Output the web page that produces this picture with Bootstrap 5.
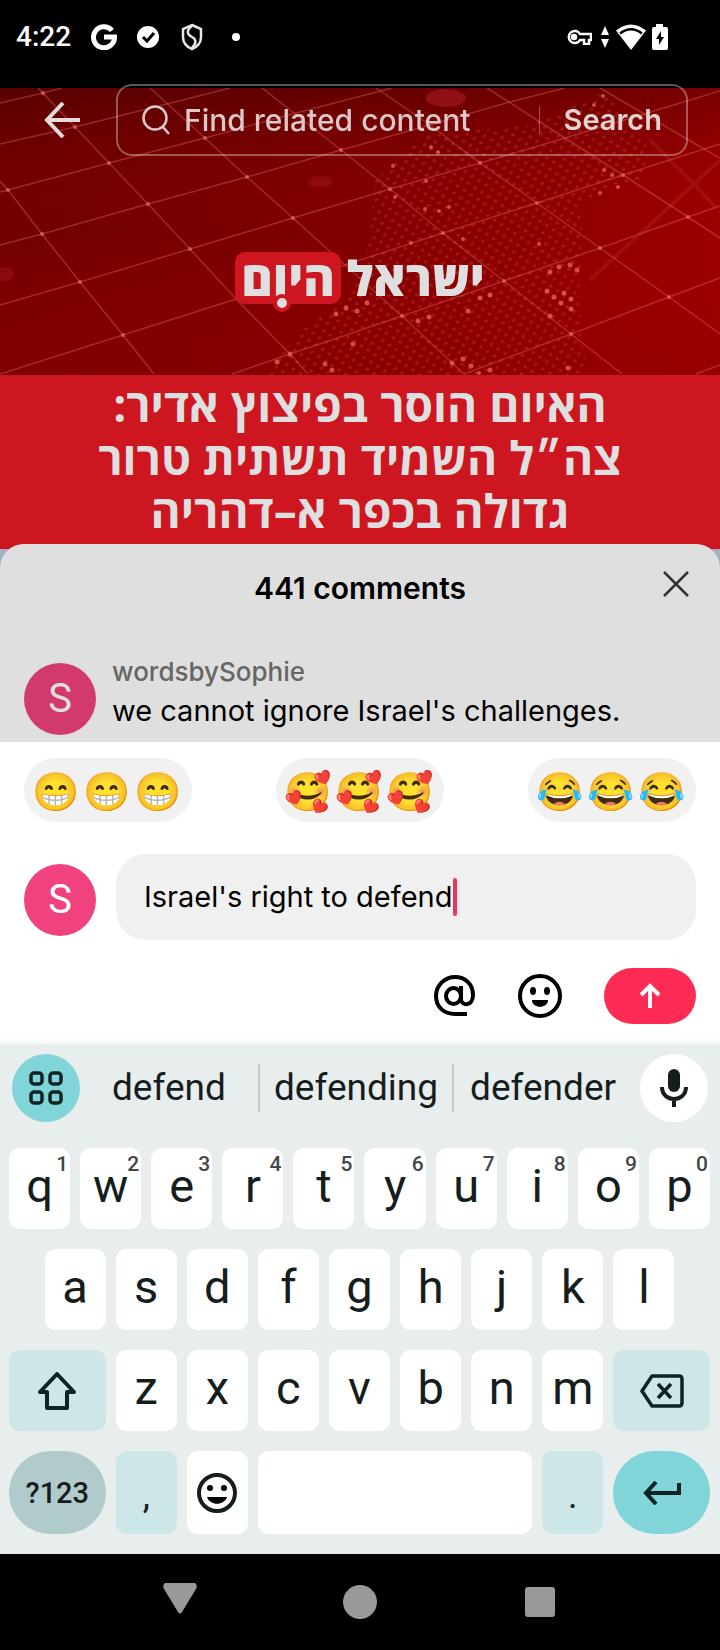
<!DOCTYPE html>
<html lang="en">
<head>
<meta charset="utf-8">
<meta name="viewport" content="width=device-width, initial-scale=1">
<title>Comments</title>
<link href="https://cdn.jsdelivr.net/npm/bootstrap@5.3.0/dist/css/bootstrap.min.css" rel="stylesheet">
<style>
  body { font-family: Inter, "Liberation Sans", sans-serif; background: #000; color: #000; }
  button { font-family: inherit; }
  svg { display: block; flex: none; }
  .icon-btn { border: 0; background: none; padding: 0; display: flex; align-items: center; justify-content: center; }

  .statusbar { height: 88px; padding: 0 52px 14px 16px; color: #fff; }
  .clock { font: 500 28px/32px Roboto, sans-serif; width: 75px; }
  .signals { gap: 6px; }

  .hero { display: flow-root; height: 287px; background: #7d0000; }
  .hero-art { position: absolute; inset: 0; width: 100%; height: 100%; }
  .searchrow { position: relative; margin-top: -4px; padding: 0 32px 0 44px; gap: 36px; color: #dfdfdf; }
  .searchbox { height: 72px; border: 2px solid rgba(255,255,255,.34); border-radius: 16px; padding: 0 24px; }
  .searchbox input { border: 0; background: none; outline: 0; width: 0; margin-left: 14px; padding: 0; color: inherit; font: 500 30px/40px Inter, sans-serif; }
  .searchbox input::placeholder { color: #dcc8c8; opacity: 1; }
  .searchbox button { font: 600 29px/40px Inter, sans-serif; color: #e3d4d4; }
  .split { width: 1px; height: 28px; background: rgba(255,255,255,.3); margin-right: 24px; }

  .masthead { position: relative; margin-top: 96px; gap: 6px; font: 800 48px/52px "Open Sans", "Liberation Sans", sans-serif; color: #dfdfdf; }
  .masthead-tag { position: relative; background: #ce1620; border-radius: 10px; padding: 0 6px; }
  .masthead-tag i { position: absolute; left: 38px; bottom: -8px; width: 18px; height: 18px; border: 4px solid #ce1620; border-radius: 50%; background: #dfdfdf; }

  .headline { background: #ce1620; color: #dfdfdf; height: 174px; padding-top: 3px; font: 700 46px/53px "Open Sans", "Liberation Sans", sans-serif; margin: 0; }
  .behind { background: linear-gradient(#ce1620 5px, #a3afc2 5px); margin-top: -5px; }
  .sheet { background: #dfdfdf; border-radius: 24px 24px 0 0; height: 198px; padding: 24px 24px 7px; }
  .sheet h1 { font-size: 30px; line-height: 40px; font-weight: 600; margin: 0; }
  .close-pos { position: absolute; right: 0; top: 0; padding: 3px 7px; }
  .avatar { width: 72px; height: 72px; border-radius: 50%; background: #f0427e; color: #fff; font: 400 40px/72px Roboto, sans-serif; text-align: center; flex: none; }
  .avatar-dim { background: #d23a6e; color: #dfdfdf; }
  .who { font-size: 26px; line-height: 38px; font-weight: 500; color: #666; text-decoration: none; }
  .said { font-size: 29px; line-height: 40px; margin: 0; }

  .composer { background: linear-gradient(to top, #f4f6f6, #fff 6px); padding: 16px 24px 20px; height: 302px; }
  .chips { margin-bottom: 32px; }
  .chip { border: 0; width: 168px; height: 64px; border-radius: 32px; background: #f1f1f1; padding: 2px 11px 0; gap: 9px; font: 38px/64px "Noto Color Emoji", sans-serif; }
  .chip span { width: 42px; display: flex; justify-content: center; }
  .entry { gap: 20px; }
  .field { height: 86px; border-radius: 30px; background: #f0f0f0; padding: 0 28px; }
  .field input { border: 0; background: none; outline: 0; padding: 0; width: 309px; font-size: 29px; line-height: 40px; }
  .caret { width: 4px; height: 38px; border-radius: 2px; background: #ea3560; }
  .tools { gap: 42px; margin-top: 28px; }
  .send { width: 92px; height: 56px; border-radius: 28px; background: #fe2c55; }

  .keyboard { background: #e8eeee; padding: 10px 5px 20px 4px; height: 510px; color: #161d1d; font-family: Roboto, sans-serif; }
  .suggest { padding: 0 7px 0 8px; height: 68px; margin-bottom: 26px; }
  .round { width: 68px; height: 68px; border-radius: 50%; flex: none; }
  .word { border: 0; background: none; padding: 0; font-size: 37px; line-height: 48px; flex: 37 1 0; color: inherit; }
  .word-main { flex-grow: 40; border: solid #c4caca; border-width: 0 2px; }
  .keys { display: grid; grid-template-columns: repeat(20, 1fr); row-gap: 20px; }
  .key { position: relative; grid-column: span 2; height: 81px; margin: 0 5px; border: 0; border-radius: 11px; background: #fff; color: inherit; padding: 0 0 6px; font-size: 47px; line-height: 74px; display: flex; justify-content: center; align-items: center; }
  .key sup { position: absolute; top: 4px; right: 2px; font-size: 21px; line-height: 24px; font-weight: 500; color: #414848; }
  .indent { grid-column: 2 / span 2; }
  .wide { grid-column: span 3; }
  .space { grid-column: span 8; }
  .low { height: 83px; }
  .tint { background: #cde7e8; }
  .teal { background: #81d4d8; }
  .pill { border-radius: 42px; }
  .sym { background: #b1cbcd; font-size: 29px; font-weight: 500; white-space: nowrap; padding: 0; }
  .punct { font-size: 36px; padding: 6px 0 0; }

  .navbar-sys { height: 96px; padding: 0 90px; background: #000; }
  .navbar-sys button { flex: 1; }
</style>
</head>
<body>
<header class="statusbar d-flex align-items-center">
  <span class="clock">4:22</span>
  <svg width="26" height="26" viewBox="0 0 26 26" fill="none" stroke="#fff" stroke-width="5"><path d="M21 6.500A10.500 10.500 0 1 0 23.500 13H13"/></svg>
  <svg class="ms-3 me-3" width="28" height="24" viewBox="0 0 28 24"><circle cx="15" cy="12" r="11" fill="#fff"/><path d="M10 12l4 4 7-8" fill="none" stroke="#000" stroke-width="3"/></svg>
  <svg width="30" height="28" viewBox="0 0 30 28" fill="none" stroke="#e8e8e8" stroke-width="2.500"><path d="M15 2l9 4v8c0 6-4 10-9 12-5-2-9-6-9-12V6z"/><path d="M15 3C8 8 11 12 15 14s5 6 0 11"/></svg>
  <svg class="ms-3" width="24" height="18" viewBox="0 0 24 18"><circle cx="13" cy="9" r="4" fill="#fff"/></svg>
  <div class="signals d-flex align-items-center ms-auto">
    <svg width="26" height="16" viewBox="0 0 26 16" fill="none" stroke="#fff" stroke-width="2.500"><path d="M14 5a6 6 0 1 0 0 6h4v4h5v-4h2V5z"/><circle cx="8" cy="8" r="2" fill="#fff"/></svg>
    <svg width="12" height="22" viewBox="0 0 12 22" fill="#fff"><path d="M7 0l4 9H3zM7 22l4-9H3z"/></svg>
    <svg width="30" height="26" viewBox="0 0 30 26"><path d="M0 6.500Q15-5.500 30 6.500L15 26z" fill="#fff"/><path d="M4 9.500Q15 1 26 9.500" fill="none" stroke="#000" stroke-width="2.500"/></svg>
    <svg width="16" height="26" viewBox="0 0 16 26"><path d="M4 0h7v3h3q2 0 2 2v19q0 2-2 2H2q-2 0-2-2V5q0-2 2-2h2z" fill="#fff"/><path d="M9 7l-5 8h3v6l5-8H9z"/></svg>
  </div>
</header>

<section class="hero position-relative">
  <svg class="hero-art" viewBox="0 88 720 287" preserveAspectRatio="none" aria-hidden="true">
    <defs>
      <linearGradient id="base" x1="0" y1="0" x2="1" y2="0"><stop offset="0" stop-color="#700000"/><stop offset=".35" stop-color="#7a0000"/><stop offset=".7" stop-color="#8a0000"/><stop offset="1" stop-color="#9c0000"/></linearGradient>
      <linearGradient id="lift" x1="0" y1="0" x2="0" y2="1"><stop offset="0" stop-color="#200000" stop-opacity=".3"/><stop offset=".5" stop-color="#a00" stop-opacity="0"/><stop offset="1" stop-color="#900000" stop-opacity=".5"/></linearGradient>
      <pattern id="dots" width="11" height="12" patternUnits="userSpaceOnUse" patternTransform="rotate(-14)"><ellipse cx="3" cy="3" rx="2" ry="1.500" fill="#d04444"/><ellipse cx="8.500" cy="9" rx="2" ry="1.500" fill="#d04444"/></pattern>
    </defs>
    <rect y="88" width="720" height="287" fill="url(#base)"/>
    <rect y="88" width="720" height="287" fill="url(#lift)"/>
    <path d="M605 92L650 150 640 180 582 200 580 330 588 375H265L300 330 350 295 368 250 375 180 425 135 530 125z" fill="url(#dots)" opacity=".36"/>
    <g fill="none" stroke="#e06060" stroke-opacity=".42" stroke-width="1.500">
      <path d="M0 103L43 93 62 88M0 144L75 127 167 104 230 88M0 192L109 163 205 138 300 112 392 88M0 245L42 234 148 204 247 177 341 150 430 125 510 102 565 88M0 305L80 282 190 249 293 218 390 189 480 163 565 138 720 91M0 374L123 335 236 299 345 265 443 233 537 203 623 175 704 149 720 144M232 374L290 354 402 316 504 281 600 248 688 217 720 206M464 374L571 334 669 297 720 278M696 374L720 365"/>
      <path d="M0 181L8 190 42 234 80 282 123 335 154 374M38 88L75 127 109 163 148 204 190 249 236 299 290 354 308 374M150 88L205 138 247 177 293 218 345 265 402 316 464 374M262 88L341 150 390 189 443 233 504 281 571 334 622 374M376 88L430 125 480 163 537 203 600 248 669 297 720 334M487 88L565 138 623 175 688 217 720 238M600 88L704 149 720 158"/>
      <path d="M720 160L694 184 590 280M650 140L694 184 716 208" stroke-opacity=".14" stroke-width="4"/>
    </g>
    <g fill="#e96464" opacity=".75">
      <circle cx="123" cy="335" r="2"/><circle cx="443" cy="233" r="2"/><circle cx="537" cy="203" r="2"/><circle cx="600" cy="248" r="2"/><circle cx="504" cy="281" r="2"/><circle cx="402" cy="316" r="2"/><circle cx="571" cy="334" r="2"/><circle cx="669" cy="297" r="2"/><circle cx="688" cy="217" r="2"/><circle cx="293" cy="218" r="2"/><circle cx="190" cy="249" r="2"/><circle cx="148" cy="204" r="2"/><circle cx="80" cy="282" r="2"/><circle cx="42" cy="234" r="2"/><circle cx="8" cy="190" r="2"/><circle cx="109" cy="163" r="2"/><circle cx="75" cy="127" r="2"/><circle cx="43" cy="93" r="2"/><circle cx="247" cy="177" r="2"/><circle cx="205" cy="138" r="2"/><circle cx="341" cy="150" r="2"/><circle cx="390" cy="189" r="2"/><circle cx="480" cy="163" r="2"/><circle cx="623" cy="175" r="2"/><circle cx="290" cy="354" r="2.500"/>
      <circle cx="550" cy="272" r="2.500"/><circle cx="559" cy="267" r="2.500"/><circle cx="570" cy="265" r="2.500"/><circle cx="577" cy="270" r="2.500"/><circle cx="547" cy="291" r="2.500"/><circle cx="554" cy="297" r="2.500"/><circle cx="564" cy="293" r="2.500"/><circle cx="571" cy="299" r="2.500"/><circle cx="561" cy="303" r="2.500"/><circle cx="571" cy="309" r="2.500"/><circle cx="550" cy="316" r="2.500"/><circle cx="336" cy="314" r="2.500"/><circle cx="346" cy="308" r="2.500"/><circle cx="357" cy="311" r="2.500"/><circle cx="367" cy="303" r="2.500"/><circle cx="353" cy="344" r="2.500"/><circle cx="277" cy="362" r="2.500"/><circle cx="325" cy="364" r="2.500"/><circle cx="332" cy="370" r="2.500"/><circle cx="452" cy="363" r="2.500"/><circle cx="463" cy="359" r="2.500"/><circle cx="471" cy="366" r="2.500"/><circle cx="479" cy="373" r="2"/><circle cx="490" cy="370" r="2.500"/><circle cx="568" cy="368" r="2.500"/><circle cx="418" cy="321" r="2.500"/><circle cx="429" cy="317" r="2.500"/><circle cx="468" cy="311" r="2.500"/><circle cx="480" cy="298" r="2.500"/><circle cx="490" cy="295" r="2.500"/><circle cx="411" cy="243" r="2"/><circle cx="463" cy="239" r="2"/><circle cx="539" cy="244" r="2"/><circle cx="425" cy="209" r="2"/><circle cx="439" cy="211" r="2"/><circle cx="449" cy="207" r="2"/><circle cx="395" cy="197" r="2"/><circle cx="426" cy="181" r="2"/><circle cx="393" cy="166" r="2"/><circle cx="431" cy="147" r="2"/><circle cx="438" cy="152" r="2"/><circle cx="604" cy="170" r="2"/><circle cx="612" cy="175" r="2"/><circle cx="618" cy="187" r="2"/><circle cx="600" cy="193" r="2"/><circle cx="603" cy="96" r="2"/><circle cx="594" cy="105" r="2"/>
    </g>
    <g fill="#d03040" opacity=".35"><ellipse cx="446" cy="98" rx="20" ry="9"/><ellipse cx="320" cy="182" rx="12" ry="6" opacity=".6"/><ellipse cx="4" cy="274" rx="10" ry="7" opacity=".6"/></g>
  </svg>

  <form class="searchrow d-flex align-items-center">
    <button type="button" class="icon-btn" aria-label="Back"><svg width="36" height="36" viewBox="0 0 36 36" fill="none" stroke="#e6dada" stroke-width="4"><path d="M19 1L3 18l16 17M3 18h33"/></svg></button>
    <div class="searchbox d-flex align-items-center flex-grow-1">
      <svg width="28" height="30" viewBox="0 0 28 30" fill="none" stroke="#dcc8c8" stroke-width="2.500"><circle cx="13" cy="13" r="11.500"/><path d="M21 22l6 7"/></svg>
      <input class="flex-grow-1" type="search" placeholder="Find related content" aria-label="Find related content">
      <span class="split"></span>
      <button type="button" class="icon-btn">Search</button>
    </div>
  </form>
  <div class="masthead d-flex justify-content-center" dir="rtl" lang="he"><span>ישראל</span><span class="masthead-tag">היום<i></i></span></div>
</section>

<h2 class="headline text-center" dir="rtl" lang="he">האיום הוסר בפיצוץ אדיר:<br>צה״ל השמיד תשתית טרור<br>גדולה בכפר א–דהריה</h2>

<main>
  <div class="behind">
    <section class="sheet d-flex flex-column justify-content-between">
      <div class="position-relative text-center">
        <h1>441 comments</h1>
        <button type="button" class="icon-btn close-pos" aria-label="Close"><svg width="26" height="26" viewBox="0 0 26 26" fill="none" stroke="#333" stroke-width="2.500"><path d="M1 1l24 24M25 1L1 25"/></svg></button>
      </div>
      <article class="d-flex align-items-end gap-3">
        <span class="avatar avatar-dim">S</span>
        <div class="pb-1"><a class="who d-block" href="#">wordsbySophie</a><p class="said">we cannot ignore Israel's challenges.</p></div>
      </article>
    </section>
  </div>

  <form class="composer">
    <div class="chips d-flex justify-content-between">
      <button type="button" class="chip d-flex"><span>😁</span><span>😁</span><span>😁</span></button>
      <button type="button" class="chip d-flex"><span>🥰</span><span>🥰</span><span>🥰</span></button>
      <button type="button" class="chip d-flex"><span>😂</span><span>😂</span><span>😂</span></button>
    </div>
    <div class="entry d-flex align-items-end">
      <span class="avatar mb-1">S</span>
      <label class="field d-flex align-items-center flex-grow-1"><input type="text" value="Israel's right to defend" aria-label="Add comment"><span class="caret"></span></label>
    </div>
    <div class="tools d-flex justify-content-end align-items-center">
      <button type="button" class="icon-btn" aria-label="Mention"><svg width="42" height="42" viewBox="0 0 42 42" fill="none" stroke="#000" stroke-width="4"><ellipse cx="19.500" cy="21" rx="7.500" ry="8"/><path d="M27 11v13c0 7 12 8 12-4C39 9 31 2 21 2S2 10 2 21s8 18 19 18h12"/></svg></button>
      <button type="button" class="icon-btn" aria-label="Emoji"><svg width="44" height="44" viewBox="0 0 44 44"><circle cx="22" cy="22" r="20" fill="none" stroke="#000" stroke-width="4"/><ellipse cx="15" cy="17" rx="3" ry="4"/><ellipse cx="29" cy="17" rx="3" ry="4"/><path d="M14 26h16c0 9-16 9-16 0z"/></svg></button>
      <button type="submit" class="icon-btn send" aria-label="Send"><svg width="22" height="26" viewBox="0 0 22 26" fill="none" stroke="#fff" stroke-width="4"><path d="M2 12l9-9 9 9M11 3v22"/></svg></button>
    </div>
  </form>
</main>

<section class="keyboard" aria-label="Keyboard">
  <div class="suggest d-flex align-items-center">
    <button type="button" class="icon-btn round teal" aria-label="Tools"><svg width="34" height="34" viewBox="0 0 34 34" fill="none" stroke="#0d2426" stroke-width="3.500"><rect x="2" y="2" width="11" height="11" rx="3"/><rect x="21" y="2" width="11" height="11" rx="3"/><rect x="2" y="21" width="11" height="11" rx="3"/><rect x="21" y="21" width="11" height="11" rx="3"/></svg></button>
    <div class="d-flex flex-grow-1 me-2">
      <button type="button" class="word">defend</button>
      <button type="button" class="word word-main">defending</button>
      <button type="button" class="word">defender</button>
    </div>
    <button type="button" class="icon-btn round bg-white" aria-label="Voice input"><svg width="28" height="38" viewBox="0 0 28 38" fill="none" stroke="#161d1d" stroke-width="4"><rect x="8" y="0" width="12" height="23" rx="6" fill="#161d1d" stroke="none"/><path d="M2 18c0 16 24 16 24 0M14 30v8"/></svg></button>
  </div>
  <div class="keys">
    <button type="button" class="key">q<sup>1</sup></button><button type="button" class="key">w<sup>2</sup></button><button type="button" class="key">e<sup>3</sup></button><button type="button" class="key">r<sup>4</sup></button><button type="button" class="key">t<sup>5</sup></button><button type="button" class="key">y<sup>6</sup></button><button type="button" class="key">u<sup>7</sup></button><button type="button" class="key">i<sup>8</sup></button><button type="button" class="key">o<sup>9</sup></button><button type="button" class="key">p<sup>0</sup></button>
    <button type="button" class="key indent">a</button><button type="button" class="key">s</button><button type="button" class="key">d</button><button type="button" class="key">f</button><button type="button" class="key">g</button><button type="button" class="key">h</button><button type="button" class="key">j</button><button type="button" class="key">k</button><button type="button" class="key">l</button>
    <button type="button" class="key wide tint p-0" aria-label="Shift"><svg width="40" height="38" viewBox="0 0 40 38" fill="none" stroke="#0d2426" stroke-width="4" stroke-linejoin="round"><path d="M20 2L3 20h7v16h20V20h7z"/></svg></button><button type="button" class="key">z</button><button type="button" class="key">x</button><button type="button" class="key">c</button><button type="button" class="key">v</button><button type="button" class="key">b</button><button type="button" class="key">n</button><button type="button" class="key">m</button><button type="button" class="key wide tint p-0" aria-label="Backspace"><svg width="44" height="34" viewBox="0 0 44 34" fill="none" stroke="#0d2426" stroke-width="3.500"><path d="M12 2h27q3 0 3 3v24q0 3-3 3H12L2 17z" stroke-linejoin="round"/><path d="M18 10l13 14M31 10L18 24"/></svg></button>
    <button type="button" class="key wide low pill sym">?123</button><button type="button" class="key low tint punct">,</button><button type="button" class="key low p-0" aria-label="Emoji"><svg width="40" height="40" viewBox="0 0 40 40"><circle cx="20" cy="20" r="18" fill="none" stroke="#161d1d" stroke-width="4"/><circle cx="13" cy="15" r="3"/><circle cx="27" cy="15" r="3"/><path d="M10 24h20c-3 9-17 9-20 0z"/></svg></button><button type="button" class="key low space" aria-label="Space"></button><button type="button" class="key low tint punct">.</button><button type="button" class="key wide low pill teal p-0" aria-label="Enter"><svg width="38" height="24" viewBox="0 0 38 24" fill="none" stroke="#0d2426" stroke-width="4"><path d="M13 1L3 12l10 11M3 12h33V2"/></svg></button>
  </div>
</section>

<nav class="navbar-sys d-flex align-items-center" aria-label="System">
  <button type="button" class="icon-btn" aria-label="Back"><svg width="36" height="38" viewBox="0 0 36 38" fill="#999"><path d="M3 0h30q3 2 1 6L20 29q-2 3-4 0L2 6Q0 2 3 0z"/></svg></button>
  <button type="button" class="icon-btn" aria-label="Home"><svg width="34" height="34" viewBox="0 0 34 34"><circle cx="17" cy="17" r="17" fill="#999"/></svg></button>
  <button type="button" class="icon-btn" aria-label="Recents"><svg width="30" height="30" viewBox="0 0 30 30"><rect width="30" height="30" rx="3" fill="#999"/></svg></button>
</nav>
<script src="https://cdn.jsdelivr.net/npm/bootstrap@5.3.0/dist/js/bootstrap.bundle.min.js"></script>
</body>
</html>
